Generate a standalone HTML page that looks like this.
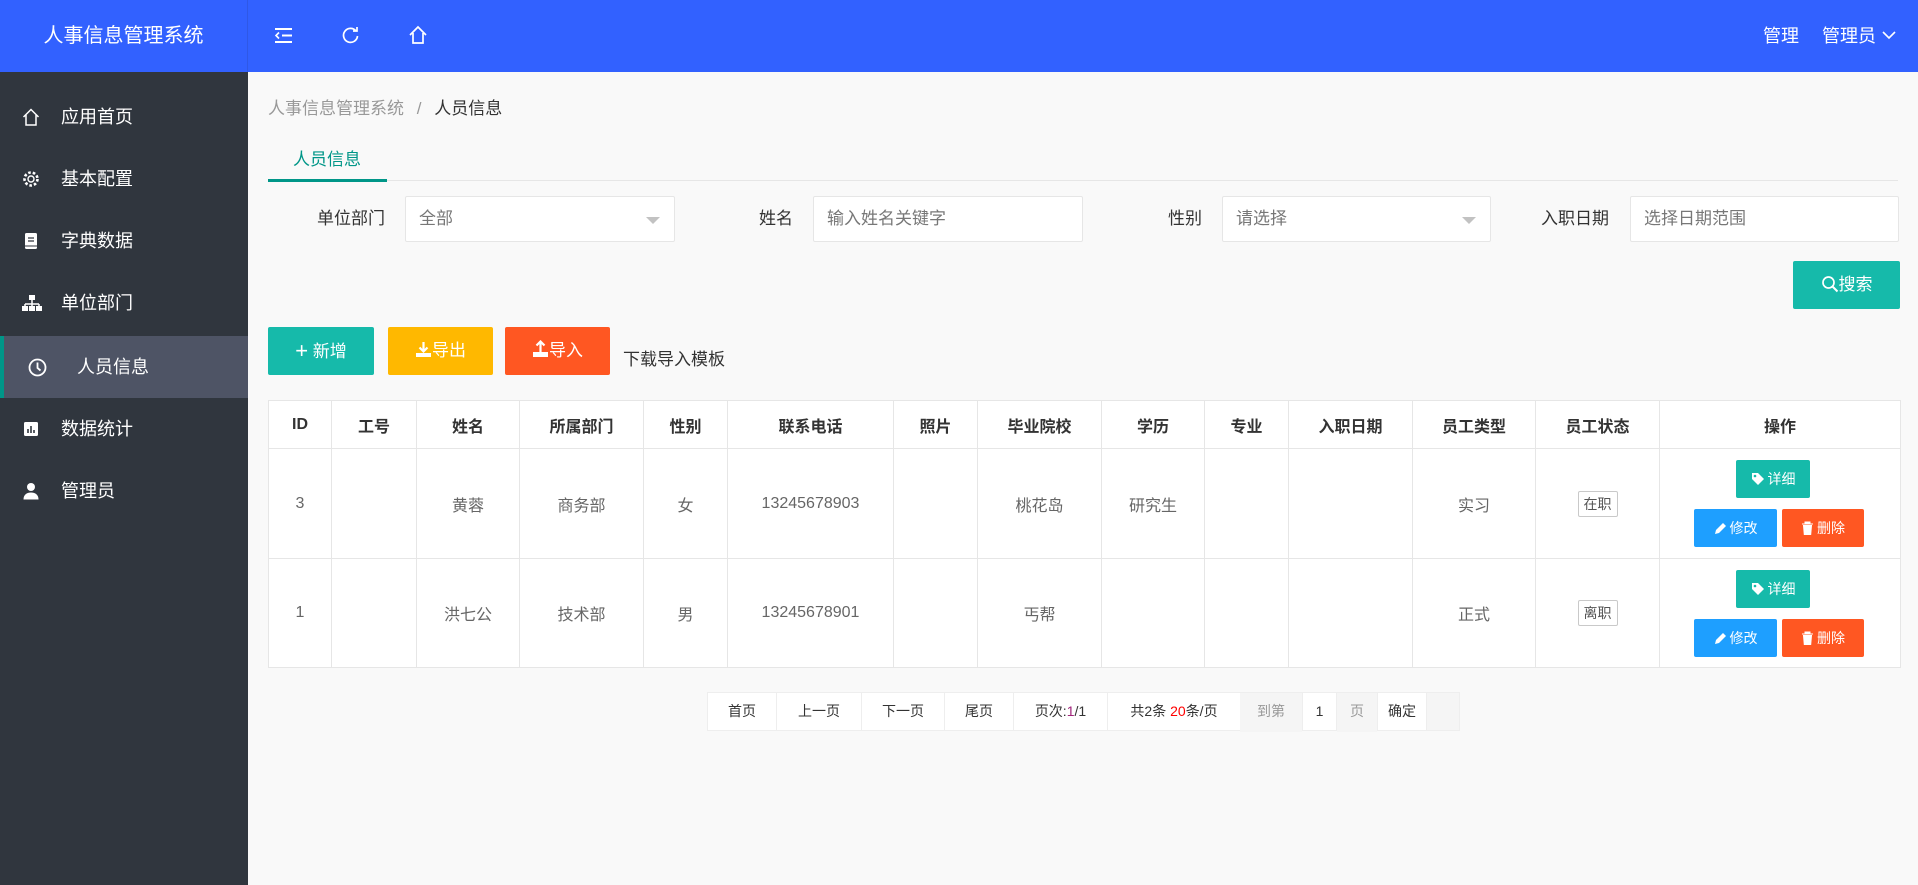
<!DOCTYPE html>
<html><head><meta charset="utf-8"><style>
*{margin:0;padding:0;box-sizing:border-box}
body{width:1918px;height:885px;overflow:hidden;background:#f9f9f9;font-family:"Liberation Sans","Noto Sans CJK SC",sans-serif;color:#333;position:relative}
.a{position:absolute}
.hdr{left:0;top:0;width:1918px;height:72px;background:#3261ff}
.logo{left:0;top:0;width:248px;height:72px;color:#fff;font-size:20px;line-height:72px;text-align:center;border-right:1px solid #2f58e6}
.side{left:0;top:72px;width:248px;height:813px;background:#30363e}
.mi{left:0;width:248px;height:62px;color:#fff;font-size:18px;line-height:62px}
.mi svg{position:absolute;left:22px;top:22px}
.mi span{position:absolute;left:61px}
.lbl{font-size:17px;color:#333;line-height:45px}
.inp{background:#fff;border:1px solid #e6e6e6;border-radius:2px;height:46px;font-size:17px;color:#777;line-height:44px;padding-left:13px}
.tri{position:absolute;right:14px;top:20px;width:0;height:0;border-left:7px solid transparent;border-right:7px solid transparent;border-top:7px solid #c2c2c2}
.btn{color:#fff;font-size:17px;text-align:center;border-radius:2px;line-height:48px;height:48px}
table{border-collapse:collapse;position:absolute;left:268px;top:400px;background:#fff}
td,th{border:1px solid #e6e6e6;text-align:center;font-size:16px}
th{height:48px;font-weight:bold;color:#333}
td{color:#666}
.tag{display:inline-block;border:1px solid #c9c9c9;font-size:14px;color:#555;padding:0 5px;line-height:24px;border-radius:2px}
.sb{display:inline-block;color:#fff;font-size:14px;height:38px;line-height:38px;border-radius:2px;text-align:center}
.sb svg{vertical-align:-2px;margin-right:3px}
.pg{top:692px;height:39px;background:#fff;border:1px solid #eee;font-size:14px;line-height:37px;text-align:center;color:#333}
</style></head><body>
<div class="a hdr"></div>
<div class="a logo">人事信息管理系统</div>
<svg class="a" style="left:274px;top:27px" width="19" height="17" viewBox="0 0 19 17"><g fill="none" stroke="#fff" stroke-width="2"><path d="M1 2h17M8 8.5h10M1 15h17"/><path d="M5 5.5l-3 3 3 3" stroke-width="1.6"/></g></svg>
<svg class="a" style="left:341px;top:26px" width="19" height="19" viewBox="0 0 19 19"><path d="M15 5A7 7 0 1 0 16.5 10" fill="none" stroke="#fff" stroke-width="1.7"/><path d="M12 5h4V1" fill="none" stroke="#fff" stroke-width="1.7"/></svg>
<svg class="a" style="left:408px;top:25px" width="20" height="20" viewBox="0 0 20 20"><path d="M2 10L10 2l8 8M5 8v10h10V8" fill="none" stroke="#fff" stroke-width="1.7"/></svg>
<div class="a" style="left:1763px;top:22px;color:#fff;font-size:18px">管理</div>
<div class="a" style="left:1822px;top:22px;color:#fff;font-size:18px">管理员</div>
<svg class="a" style="left:1882px;top:30px" width="14" height="10" viewBox="0 0 14 10"><path d="M1 2l6 6 6-6" fill="none" stroke="#fff" stroke-width="1.6"/></svg>

<div class="a side"></div>
<div class="a mi" style="top:86px"><svg width="18" height="18" viewBox="0 0 18 18"><path d="M1.5 9L9 1.5 16.5 9M4 7v10h10V7" fill="none" stroke="#fff" stroke-width="1.5"/></svg><span>应用首页</span></div>
<div class="a mi" style="top:148px"><svg width="18" height="18" viewBox="0 0 18 18"><circle cx="9" cy="9" r="6.5" fill="none" stroke="#fff" stroke-width="2.6" stroke-dasharray="2.6 2"/><circle cx="9" cy="9" r="3" fill="none" stroke="#fff" stroke-width="1.4"/></svg><span>基本配置</span></div>
<div class="a mi" style="top:210px"><svg width="18" height="18" viewBox="0 0 18 18"><rect x="3" y="1" width="12" height="16" rx="1.5" fill="#fff"/><path d="M6 6h6M6 9h6" stroke="#30363e" stroke-width="1.3"/><path d="M3 14h12" stroke="#30363e" stroke-width="1"/></svg><span>字典数据</span></div>
<div class="a mi" style="top:272px"><svg width="20" height="18" viewBox="0 0 20 18"><rect x="7" y="1" width="6" height="5" fill="#fff"/><path d="M10 6v4M3 10h14M3 10v3M17 10v3M10 10v3" stroke="#fff" stroke-width="1.5"/><rect x="0" y="12" width="6" height="5" fill="#fff"/><rect x="7" y="12" width="6" height="5" fill="#fff"/><rect x="14" y="12" width="6" height="5" fill="#fff"/></svg><span>单位部门</span></div>
<div class="a" style="left:0;top:336px;width:248px;height:62px;background:#4e5465;border-left:4px solid #009688"></div>
<div class="a mi" style="top:336px"><svg style="left:28px" width="19" height="19" viewBox="0 0 19 19"><circle cx="9.5" cy="9.5" r="8" fill="none" stroke="#fff" stroke-width="1.8"/><path d="M9.5 4.5v5.5l3 2.5" fill="none" stroke="#fff" stroke-width="1.8"/></svg><span style="left:77px">人员信息</span></div>
<div class="a mi" style="top:398px"><svg width="18" height="18" viewBox="0 0 18 18"><rect x="2" y="2" width="14" height="14" rx="1.5" fill="#fff"/><path d="M6 13V9M9 13V6M12 13V10" stroke="#30363e" stroke-width="1.6"/></svg><span>数据统计</span></div>
<div class="a mi" style="top:460px"><svg width="18" height="18" viewBox="0 0 18 18"><circle cx="9" cy="5" r="4" fill="#fff"/><path d="M1.5 17.5c0-5 3.5-7 7.5-7s7.5 2 7.5 7z" fill="#fff"/></svg><span>管理员</span></div>

<div class="a" style="left:268px;top:94px;font-size:17px;color:#999">人事信息管理系统 <span style="margin:0 8px">/</span> <span style="color:#333">人员信息</span></div>
<div class="a" style="left:293px;top:145px;font-size:17px;color:#009688">人员信息</div>
<div class="a" style="left:268px;top:180px;width:1630px;height:1px;background:#e6e6e6"></div>
<div class="a" style="left:268px;top:179px;width:119px;height:3px;background:#009688"></div>

<div class="a lbl" style="left:317px;top:196px">单位部门</div>
<div class="a inp" style="left:405px;top:196px;width:270px">全部<div class="tri"></div></div>
<div class="a lbl" style="left:759px;top:196px">姓名</div>
<div class="a inp" style="left:813px;top:196px;width:270px">输入姓名关键字</div>
<div class="a lbl" style="left:1168px;top:196px">性别</div>
<div class="a inp" style="left:1222px;top:196px;width:269px">请选择<div class="tri"></div></div>
<div class="a lbl" style="left:1541px;top:196px">入职日期</div>
<div class="a inp" style="left:1630px;top:196px;width:269px">选择日期范围</div>

<div class="a btn" style="left:1793px;top:261px;width:107px;background:#16baaa"><svg width="18" height="18" viewBox="0 0 18 18" style="vertical-align:-3px"><circle cx="7.5" cy="7.5" r="5.5" fill="none" stroke="#fff" stroke-width="1.7"/><path d="M11.5 11.5l5 5" stroke="#fff" stroke-width="2"/></svg>搜索</div>

<div class="a btn" style="left:268px;top:327px;width:106px;background:#16baaa"><span style="font-size:22px;vertical-align:-1px">+</span> 新增</div>
<div class="a btn" style="left:388px;top:327px;width:105px;background:#ffb800"><svg width="17" height="17" viewBox="0 0 17 17" style="vertical-align:-2px"><path d="M8.5 1v9M4.5 6.5l4 4 4-4" fill="none" stroke="#fff" stroke-width="2.2"/><path d="M1 12v4h15v-4" fill="#fff"/></svg>导出</div>
<div class="a btn" style="left:505px;top:327px;width:105px;background:#ff5722"><svg width="17" height="18" viewBox="0 0 17 18" style="vertical-align:-2px"><path d="M8.5 12V2M4.5 5.5l4-4 4 4" fill="none" stroke="#fff" stroke-width="2.2"/><path d="M1 12v5h15v-5" fill="#fff"/></svg>导入</div>
<div class="a" style="left:623px;top:345px;font-size:17px;color:#333">下载导入模板</div>

<table>
<tr><th style="width:63px">ID</th><th style="width:85px">工号</th><th style="width:103px">姓名</th><th style="width:124px">所属部门</th><th style="width:84px">性别</th><th style="width:166px">联系电话</th><th style="width:84px">照片</th><th style="width:124px">毕业院校</th><th style="width:103px">学历</th><th style="width:84px">专业</th><th style="width:124px">入职日期</th><th style="width:123px">员工类型</th><th style="width:124px">员工状态</th><th style="width:241px">操作</th></tr>
<tr style="height:110px"><td>3</td><td></td><td>黄蓉</td><td>商务部</td><td>女</td><td>13245678903</td><td></td><td>桃花岛</td><td>研究生</td><td></td><td></td><td>实习</td><td><span class="tag">在职</span></td><td></td></tr>
<tr style="height:109px"><td>1</td><td></td><td>洪七公</td><td>技术部</td><td>男</td><td>13245678901</td><td></td><td>丐帮</td><td></td><td></td><td></td><td>正式</td><td><span class="tag">离职</span></td><td></td></tr>
</table>

<div class="a sb" style="left:1736px;top:460px;width:74px;background:#16baaa"><svg width="14" height="14" viewBox="0 0 14 14"><path d="M1 1h6l6 6-6 6-6-6z" fill="#fff"/><circle cx="4" cy="4" r="1.3" fill="#16baaa"/></svg>详细</div>
<div class="a sb" style="left:1694px;top:509px;width:83px;background:#1e9fff"><svg width="13" height="13" viewBox="0 0 13 13"><path d="M1 12l1-4 7-7 3 3-7 7z" fill="#fff"/></svg>修改</div>
<div class="a sb" style="left:1782px;top:509px;width:82px;background:#ff5722"><svg width="13" height="14" viewBox="0 0 13 14"><path d="M1 3h11M4 3V1h5v2M2.5 4.5h8l-.8 9h-6.4z" fill="#fff" stroke="#fff"/></svg>删除</div>
<div class="a sb" style="left:1736px;top:570px;width:74px;background:#16baaa"><svg width="14" height="14" viewBox="0 0 14 14"><path d="M1 1h6l6 6-6 6-6-6z" fill="#fff"/><circle cx="4" cy="4" r="1.3" fill="#16baaa"/></svg>详细</div>
<div class="a sb" style="left:1694px;top:619px;width:83px;background:#1e9fff"><svg width="13" height="13" viewBox="0 0 13 13"><path d="M1 12l1-4 7-7 3 3-7 7z" fill="#fff"/></svg>修改</div>
<div class="a sb" style="left:1782px;top:619px;width:82px;background:#ff5722"><svg width="13" height="14" viewBox="0 0 13 14"><path d="M1 3h11M4 3V1h5v2M2.5 4.5h8l-.8 9h-6.4z" fill="#fff" stroke="#fff"/></svg>删除</div>

<div class="a pg" style="left:707px;width:70px">首页</div>
<div class="a pg" style="left:776px;width:86px">上一页</div>
<div class="a pg" style="left:861px;width:84px">下一页</div>
<div class="a pg" style="left:944px;width:70px">尾页</div>
<div class="a pg" style="left:1013px;width:95px">页次:<span style="color:#a0247a">1</span>/1</div>
<div class="a pg" style="left:1107px;width:134px">共2条 <span style="color:#f00">20</span>条/页</div>
<div class="a pg" style="left:1240px;width:220px;background:#f5f5f5"></div>
<div class="a pg" style="left:1240px;width:62px;background:#f5f5f5;color:#999;border:none;top:693px">到第</div>
<div class="a pg" style="left:1302px;width:35px">1</div>
<div class="a pg" style="left:1337px;width:40px;background:#f5f5f5;color:#999;border:none;top:693px">页</div>
<div class="a pg" style="left:1377px;width:50px">确定</div>
</body></html>
